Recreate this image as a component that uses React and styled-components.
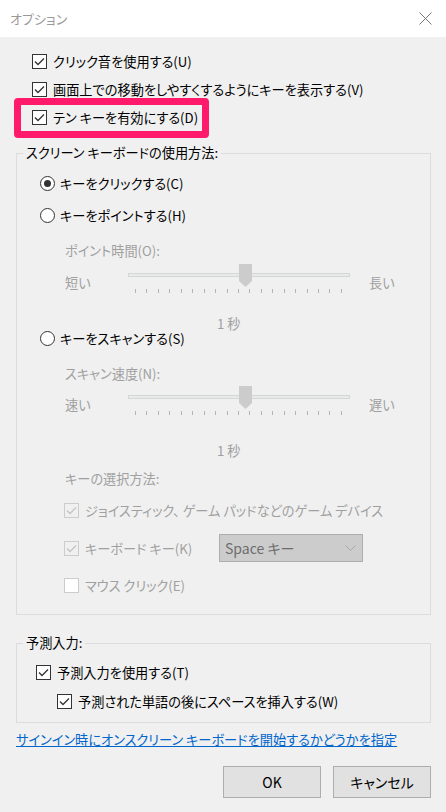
import React from "react"
import styled, { createGlobalStyle } from "styled-components"

const GlobalStyle = createGlobalStyle`
    html, body {
        margin: 0;
        padding: 0;
    }
    body {
        background: #f0f0f0;
        font-family: "Noto Sans CJK JP", "Noto Sans", sans-serif;
        font-size: 13.2px;
        font-feature-settings: "palt";
        color: #000;
    }
`

const Window = styled.div`
    width: 446px;
    height: 812px;
    background: #f0f0f0;
    display: flex;
    flex-direction: column;
    overflow: hidden;
`

const TitleBar = styled.div`
    height: 37px;
    flex: none;
    background: #fff;
    display: flex;
    align-items: center;
    justify-content: space-between;
    padding: 0 14px 0 10px;
    box-sizing: border-box;
`

const Title = styled.span`
    font-size: 13px;
    color: #999;
`

const Body = styled.div`
    display: flex;
    flex-direction: column;
    padding: 10px 15px 0 16px;
`

const Row = styled.div`
    position: relative;
    display: flex;
    align-items: center;
    gap: 6px;
    height: ${p => p.$h}px;
    margin-top: ${p => p.$mt || 0}px;
    padding-left: ${p => p.$pl || 0}px;
    color: ${p => p.$disabled ? "#a0a0a0" : "#000"};
    white-space: nowrap;
`

const Highlight = styled.div`
    position: absolute;
    left: -2px;
    top: -5px;
    width: 195px;
    height: 40px;
    border: 7px solid #ff1a6c;
    border-radius: 4px;
    box-sizing: border-box;
    pointer-events: none;
`

const Box = styled.span`
    flex: none;
    width: 15px;
    height: 15px;
    box-sizing: border-box;
    border: 1px solid ${p => p.$disabled ? "#cccccc" : "#333333"};
    background: ${p => p.$disabled && p.$checked ? "#f0f0f0" : "#fff"};
    display: flex;
    align-items: center;
    justify-content: center;
`

const Radio = styled.span`
    flex: none;
    width: 15px;
    height: 15px;
    box-sizing: border-box;
    border-radius: 50%;
    border: 1px solid #333;
    background: #fff;
    display: flex;
    align-items: center;
    justify-content: center;
    margin-right: -1px;

    &::after {
        content: "";
        width: 7px;
        height: 7px;
        border-radius: 50%;
        background: ${p => p.$on ? "#333" : "transparent"};
    }
`

const Label = styled.span`
    display: inline-block;
    width: ${p => p.$w ? `${p.$w}px` : "auto"};
    overflow: hidden;
`

const Group = styled.fieldset`
    margin: ${p => p.$mt}px 0 0;
    padding: 0 0 ${p => p.$pb}px;
    border: 1px solid #dcdcdc;
    min-width: 0;
`

const Legend = styled.legend`
    margin-left: 6px;
    padding: 0 3px;
    height: 20px;
    line-height: 20px;
`

const SliderGrid = styled.div`
    display: grid;
    grid-template-columns: 63px 222px auto;
    height: 30px;
    margin-top: ${p => p.$mt}px;
    padding-left: 48px;
    color: #a0a0a0;
`

const SideLabel = styled.span`
    padding-top: 4px;
    line-height: 20px;
    padding-left: ${p => p.$right ? 19 : 0}px;
`

const TrackArea = styled.div`
    position: relative;
`

const Track = styled.div`
    margin-top: 4px;
    height: 4px;
    box-sizing: border-box;
    border: 1px solid #d6d6d6;
    background: #e7eaea;
`

const Thumb = styled.svg`
    position: absolute;
    left: 111px;
    top: -5px;
`

const Ticks = styled.div`
    display: flex;
    justify-content: space-between;
    margin: 12px 8px 0 7px;
`

const Tick = styled.span`
    width: 1px;
    height: 4px;
    background: #b4b4b4;
`

const Select = styled.div`
    width: 144px;
    height: 28px;
    box-sizing: border-box;
    border: 1px solid #adadad;
    background: #cccccc;
    color: #6d6d6d;
    font-size: 14px;
    display: flex;
    align-items: center;
    justify-content: space-between;
    padding: 0 6px 0 5px;
`

const Link = styled.a`
    display: block;
    margin-top: 7px;
    height: 20px;
    line-height: 20px;
    color: #0066cc;
    text-decoration: underline;
    white-space: nowrap;
`

const Buttons = styled.div`
    display: flex;
    justify-content: flex-end;
    gap: 12px;
    margin-top: 16px;
`

const Button = styled.button`
    width: 98px;
    height: 32px;
    border: 1px solid #adadad;
    background: #e1e1e1;
    font: inherit;
    font-size: 14px;
    color: #000;
    padding: 0;
`

const Check = ({ checked, disabled }) => (
    <Box $checked={checked} $disabled={disabled}>
        {checked && (
            <svg width="11" height="9" viewBox="0 0 11 9">
                <polyline points="1,4.5 4,7.5 10,1.5" fill="none" stroke={disabled ? "#c4c4c4" : "#333"} strokeWidth="1.3" />
            </svg>
        )}
    </Box>
)

const Slider = ({ mt, left, right }) => (
    <SliderGrid $mt={mt}>
        <SideLabel>{left}</SideLabel>
        <TrackArea>
            <Track />
            <Thumb width="13" height="23" viewBox="0 0 13 23">
                <polygon points="0,0 13,0 13,17 6.5,23 0,17" fill="#cccccc" />
            </Thumb>
            <Ticks>
                {Array.from({ length: 19 }).map((_, i) => <Tick key={i} />)}
            </Ticks>
        </TrackArea>
        <SideLabel $right>{right}</SideLabel>
    </SliderGrid>
)

const App = () => (
    <Window>
        <GlobalStyle />
        <TitleBar>
            <Title>オプション</Title>
            <svg width="13" height="13" viewBox="0 0 13 13">
                <path d="M0.5 0.5 L12.5 12.5 M12.5 0.5 L0.5 12.5" stroke="#777" strokeWidth="1" />
            </svg>
        </TitleBar>
        <Body>
            <Row $h={28} $pl={16}><Check checked />クリック音を使用する(U)</Row>
            <Row $h={28} $pl={16}><Check checked />画面上での移動をしやすくするようにキーを表示する(V)</Row>
            <Row $h={28} $pl={16}>
                <Check checked />テン キーを有効にする(D)
                <Highlight />
            </Row>

            <Group $mt={12} $pb={11}>
                <Legend>スクリーン キーボードの使用方法:</Legend>
                <Row $h={32} $mt={4} $pl={23}><Radio $on />キーをクリックする(C)</Row>
                <Row $h={32} $pl={23}><Radio />キーをポイントする(H)</Row>
                <Row $h={20} $mt={9} $pl={48} $disabled>ポイント時間(O):</Row>
                <Slider mt={9} left="短い" right="長い" />
                <Row $h={16} $mt={16} $pl={200} $disabled>1 秒</Row>
                <Row $h={14} $pl={23}><Radio />キーをスキャンする(S)</Row>
                <Row $h={18} $mt={19} $pl={48} $disabled>スキャン速度(N):</Row>
                <Slider mt={9} left="速い" right="遅い" />
                <Row $h={16} $mt={21} $pl={200} $disabled>1 秒</Row>
                <Row $h={18} $mt={11} $pl={48} $disabled>キーの選択方法:</Row>
                <Row $h={38} $mt={4} $pl={47} $disabled>
                    <Check checked disabled />
                    <Label $w={298}>ジョイスティック、 ゲーム パッドなどのゲーム デバイス(M)</Label>
                </Row>
                <Row $h={38} $pl={47} $disabled>
                    <Check checked disabled />
                    <Label $w={128}>キーボード キー(K)</Label>
                    <Select>
                        <span>Space キー</span>
                        <svg width="11" height="6" viewBox="0 0 11 6">
                            <polyline points="0.5,0.5 5.5,5.5 10.5,0.5" fill="none" stroke="#a8a8a8" strokeWidth="1" />
                        </svg>
                    </Select>
                </Row>
                <Row $h={36} $pl={47} $disabled>
                    <Check disabled />マウス クリック(E)
                </Row>
            </Group>

            <Group $mt={18} $pb={6}>
                <Legend>予測入力:</Legend>
                <Row $h={28} $mt={5} $pl={19}><Check checked />予測入力を使用する(T)</Row>
                <Row $h={30} $pl={40}><Check checked />予測された単語の後にスペースを挿入する(W)</Row>
            </Group>

            <Link>サインイン時にオンスクリーン キーボードを開始するかどうかを指定</Link>

            <Buttons>
                <Button>OK</Button>
                <Button>キャンセル</Button>
            </Buttons>
        </Body>
    </Window>
)

export default App
